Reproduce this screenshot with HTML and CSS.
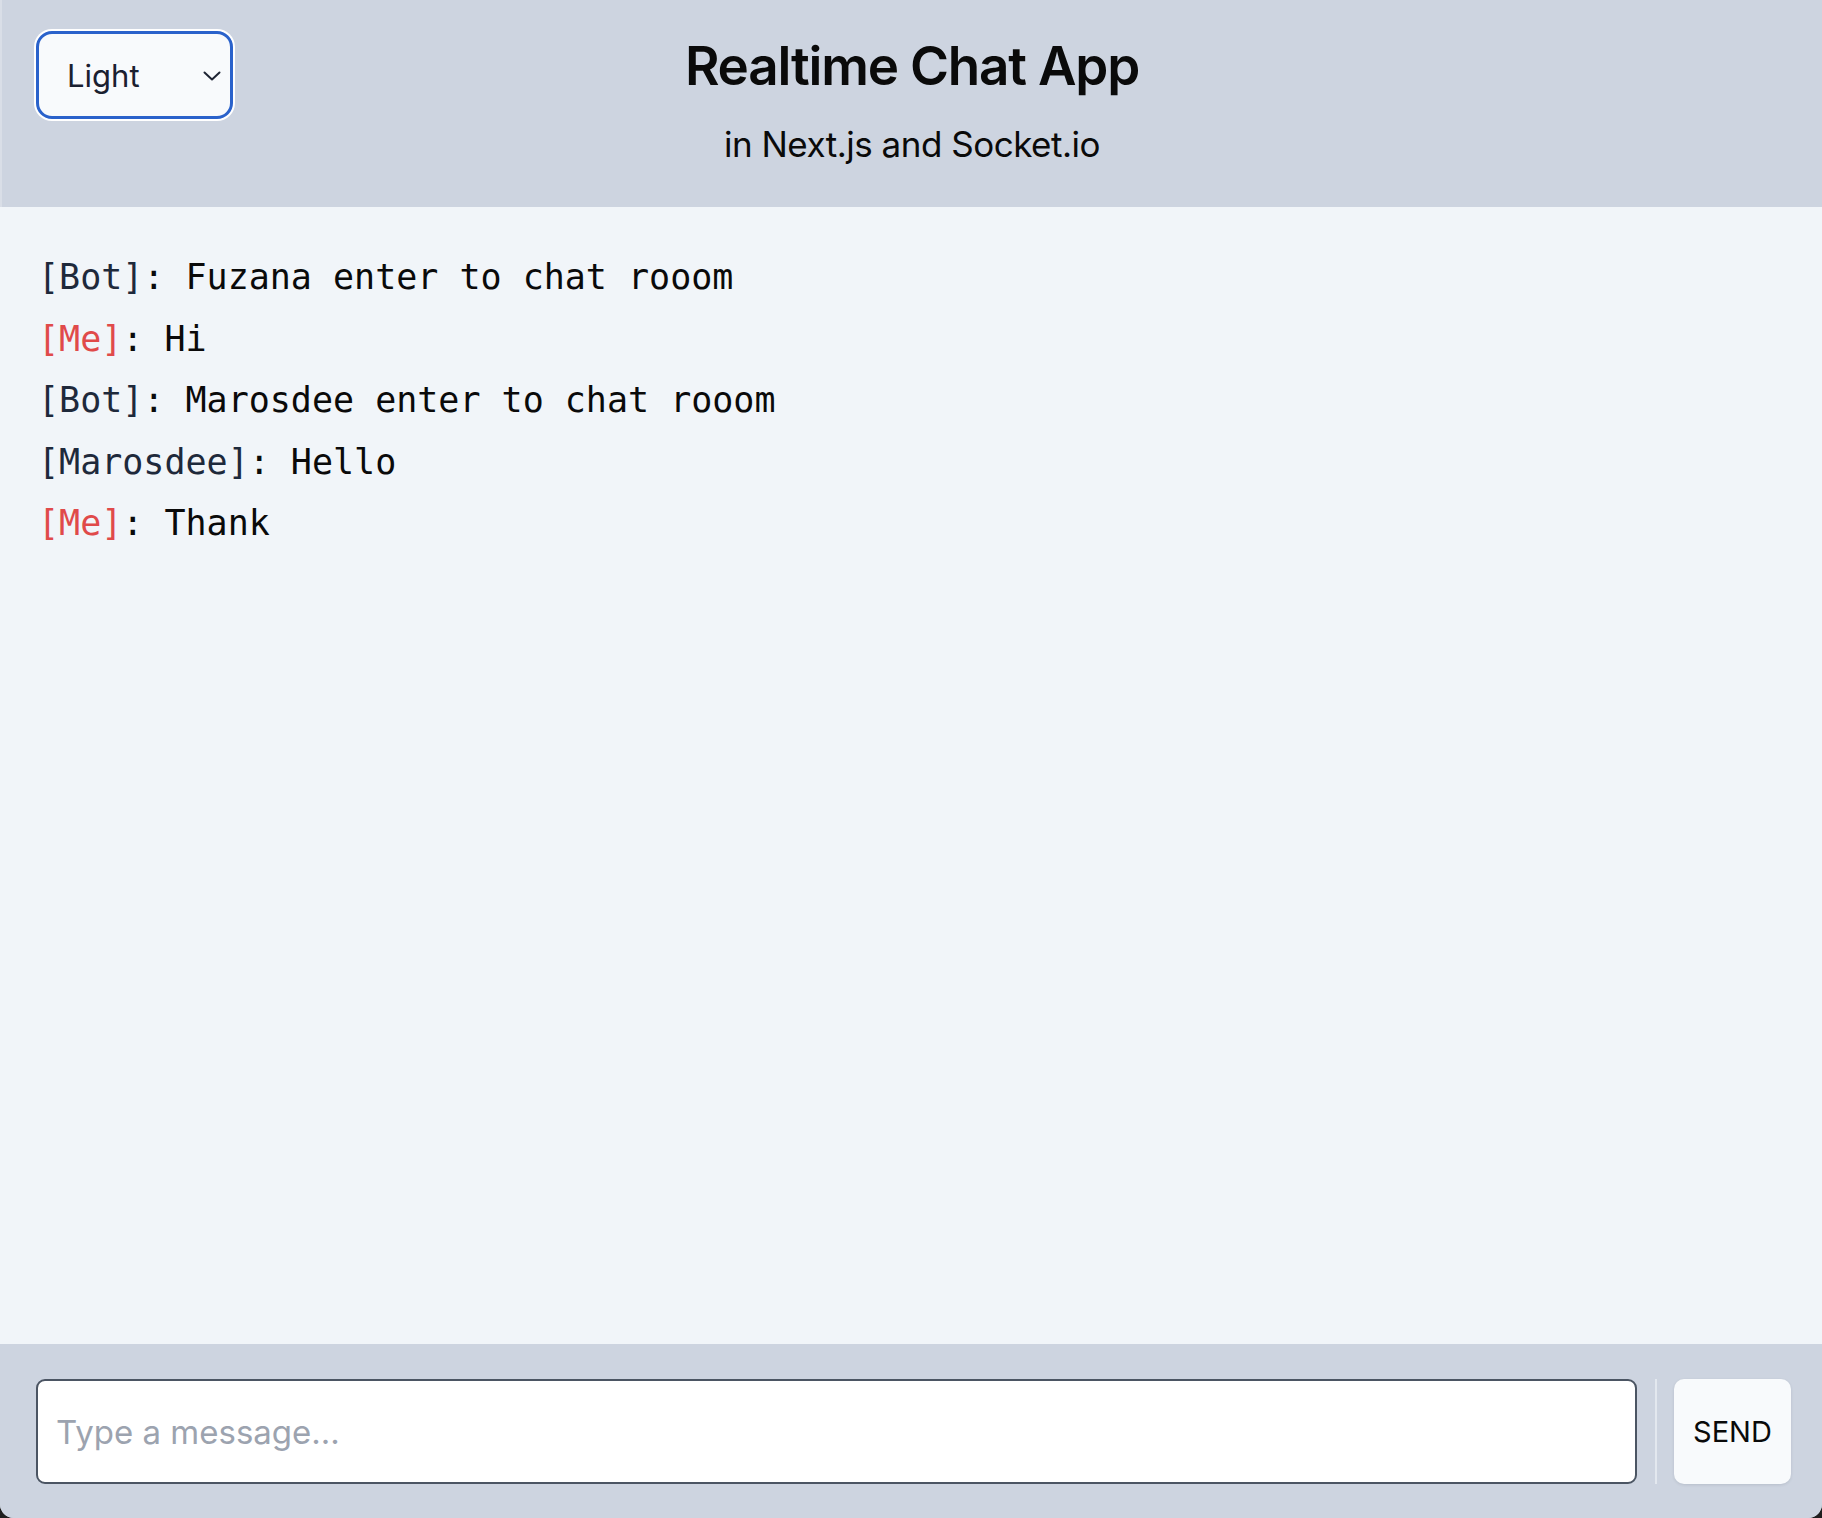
FILE: index.html
```html
<!DOCTYPE html>
<html lang="en">
<head>
<meta charset="utf-8">
<title>Realtime Chat App</title>
<link rel="stylesheet" href="styles.css">
</head>
<body>
<div class="app">
  <header class="header">
    <div class="theme">
      <div class="select-wrap">
        <select class="select">
          <option>Light</option>
          <option>Dark</option>
        </select>
        <svg class="chevron" width="18" height="10" viewBox="0 0 18 10"><path d="M1.5 1.5 L9 8.5 L16.5 1.5" fill="none" stroke="#1e2433" stroke-width="2" stroke-linecap="round" stroke-linejoin="round"/></svg>
      </div>
    </div>
    <div class="titles">
      <h1 class="title">Realtime Chat App</h1>
      <p class="subtitle">in Next.js and Socket.io</p>
    </div>
    <div></div>
  </header>
  <main class="messages">
    <div class="msg"><span class="who">[Bot]</span>: Fuzana enter to chat rooom</div>
    <div class="msg"><span class="who me">[Me]</span>: Hi</div>
    <div class="msg"><span class="who">[Bot]</span>: Marosdee enter to chat rooom</div>
    <div class="msg"><span class="who">[Marosdee]</span>: Hello</div>
    <div class="msg"><span class="who me">[Me]</span>: Thank</div>
  </main>
  <footer class="composer">
    <input class="input" type="text" placeholder="Type a message...">
    <div class="divider"></div>
    <button class="send">SEND</button>
  </footer>
</div>
</body>
</html>
```
FILE: styles.css
```css
html, body {
  margin: 0;
  padding: 0;
  height: 100%;
  background: #1f1f1f;
}
.app {
  height: 1518px;
  display: flex;
  flex-direction: column;
  font-family: Inter, "Noto Sans", sans-serif;
  border-radius: 0 0 14px 14px;
  overflow: hidden;
  background: #cdd4e0;
}
.header {
  height: 207px;
  box-sizing: border-box;
  background: #cdd4e0;
  display: grid;
  grid-template-columns: 1fr auto 1fr;
  align-items: start;
  border-left: 2px solid #d9dee7;
}
.theme {
  padding: 31px 0 0 34px;
}
.select-wrap {
  position: relative;
  width: 197px;
  height: 88px;
}
.select {
  appearance: none;
  -webkit-appearance: none;
  width: 197px;
  height: 88px;
  box-sizing: border-box;
  border: 3px solid #2a62cb;
  border-radius: 16px;
  background: #f8fafc;
  box-shadow: 0 0 0 2px #ffffff;
  padding: 0 0 0 28px;
  font-family: Inter, "Noto Sans", sans-serif;
  font-size: 31px;
  color: #1a2030;
  outline: none;
}
.chevron {
  position: absolute;
  left: 167px;
  top: 40px;
  pointer-events: none;
}
.titles {
  text-align: center;
  padding-top: 37px;
}
.title {
  margin: 0;
  font-size: 53px;
  line-height: 59px;
  font-weight: 600;
  color: #0a0a0a;
  letter-spacing: -1.2px;
}
.subtitle {
  margin: 29px 0 0;
  font-size: 35px;
  line-height: 39px;
  color: #0a0a0a;
  letter-spacing: -0.5px;
}
.messages {
  flex: 1;
  background: #f1f5f9;
  padding: 40px 38px;
  font-family: "DejaVu Sans Mono", "Liberation Mono", monospace;
  font-size: 35px;
  line-height: 61.6px;
  color: #0a0a0a;
}
.who {
  color: #1e293b;
}
.who.me {
  color: #e04a4a;
}
.composer {
  height: 174px;
  box-sizing: border-box;
  padding: 35px 31px 34px 36px;
  display: flex;
  align-items: stretch;
  background: #cdd4e0;
}
.input {
  flex: 1;
  min-width: 0;
  box-sizing: border-box;
  border: 2px solid #4b5563;
  border-radius: 9px;
  background: #ffffff;
  padding: 0 18px;
  font-family: Inter, "Noto Sans", sans-serif;
  font-size: 33px;
  color: #111;
  outline: none;
}
.input::placeholder {
  color: #9ca3af;
}
.divider {
  width: 2px;
  background: #e3e8ef;
  margin: 0 17px 0 18px;
}
.send {
  width: 117px;
  border: none;
  border-radius: 10px;
  background: #f8fafc;
  box-shadow: 0 1px 3px rgba(30, 41, 59, 0.12);
  font-family: Inter, "Noto Sans", sans-serif;
  font-size: 29px;
  color: #0a0a0a;
  padding: 0;
}
```
